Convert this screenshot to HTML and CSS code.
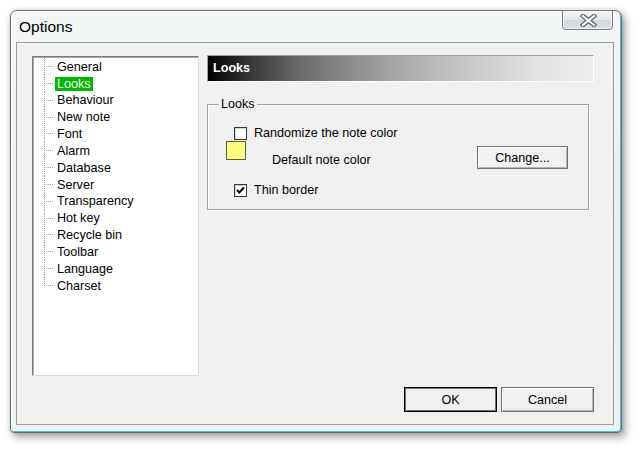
FILE: index.html
```html
<!DOCTYPE html>
<html>
<head>
<meta charset="utf-8">
<link rel="stylesheet" href="styles.css">
</head>
<body>
<div class="window">
  <div class="titlebar">
    <span class="title">Options</span>
    <button class="close" aria-label="Close">
      <svg width="17" height="13" viewBox="0 0 17 13">
        <path d="M3 2 L14 11 M14 2 L3 11" stroke="#5b6272" stroke-width="4.6" stroke-linecap="square" fill="none"/>
        <path d="M3 2 L14 11 M14 2 L3 11" stroke="#ffffff" stroke-width="2.2" stroke-linecap="square" fill="none"/>
      </svg>
    </button>
  </div>
  <div class="client">
    <div class="main">
      <ul class="tree">
        <li><span>General</span></li>
        <li class="sel"><span>Looks</span></li>
        <li><span>Behaviour</span></li>
        <li><span>New note</span></li>
        <li><span>Font</span></li>
        <li><span>Alarm</span></li>
        <li><span>Database</span></li>
        <li><span>Server</span></li>
        <li><span>Transparency</span></li>
        <li><span>Hot key</span></li>
        <li><span>Recycle bin</span></li>
        <li><span>Toolbar</span></li>
        <li><span>Language</span></li>
        <li class="last"><span>Charset</span></li>
      </ul>
      <div class="panel">
        <div class="header">Looks</div>
        <div class="group">
          <span class="legend">Looks</span>
          <div class="row r1">
            <span class="cb"></span>
            <span class="lbl">Randomize the note color</span>
          </div>
          <div class="row r2">
            <span class="swatch"></span>
            <span class="lbl2">Default note color</span>
            <button class="btn change">Change...</button>
          </div>
          <div class="row r3">
            <span class="cb"><svg width="11" height="11" viewBox="0 0 11 11"><path d="M2 5 L4.3 7.5 L9 2.5" stroke="#000" stroke-width="1.9" fill="none"/></svg></span>
            <span class="lbl">Thin border</span>
          </div>
        </div>
      </div>
    </div>
    <div class="actions">
      <button class="btn ok">OK</button>
      <button class="btn cancel">Cancel</button>
    </div>
  </div>
</div>
</body>
</html>
```

FILE: styles.css
```css
html, body {
  margin: 0;
  padding: 0;
  background: #ffffff;
}
body {
  font-family: "Liberation Sans", Arial, sans-serif;
  font-size: 12.6px;
  color: #000;
  padding: 10px 0 0 10px;
  height: 452px;
  box-sizing: border-box;
  overflow: hidden;
}
.window {
  width: 612px;
  height: 423px;
  box-sizing: border-box;
  border: 1px solid #6a6a6a;
  border-radius: 7px 7px 4px 4px;
  background: linear-gradient(to bottom, #f3f7f8 0%, #ebf1f3 40%, #edf2f3 100%);
  box-shadow: inset 1px 1px 0 #ffffff, inset -1px -1px 0 #3cc3ec, 3px 4px 9px rgba(0,0,0,0.38), 0 0 4px rgba(0,0,0,0.15);
  display: flex;
  flex-direction: column;
}
.titlebar {
  height: 31px;
  display: flex;
  justify-content: space-between;
  align-items: flex-start;
  flex: none;
}
.title {
  font-size: 15.5px;
  line-height: 18px;
  padding: 7px 0 0 8px;
  color: #000;
}
.close {
  width: 51px;
  height: 20px;
  margin: -1px 8px 0 0;
  padding: 0;
  box-sizing: border-box;
  border: 1px solid #767b82;
  border-radius: 0 0 4px 4px;
  background: linear-gradient(to bottom, #f4f5f6 0%, #e3e5e8 50%, #d3d6da 51%, #dde0e3 100%);
  box-shadow: inset 1px 0 0 #fff, inset -1px -1px 0 #f4f4f4;
  display: flex;
  align-items: center;
  justify-content: center;
}
.close svg { display: block; margin-left: 1px; }
.client {
  flex: none;
  height: 383px;
  margin: 0 7px 0 5px;
  box-sizing: border-box;
  border: 1px solid #9b9b9b;
  background: #f0f0f0;
  padding: 12px 19px 12px 15px;
  display: flex;
  flex-direction: column;
}
.main {
  display: flex;
  align-items: flex-start;
}
.tree {
  list-style: none;
  margin: 1px 0 0 0;
  padding: 1px 0 0 0;
  width: 167px;
  height: 320px;
  box-sizing: border-box;
  background: #ffffff;
  border: 1px solid;
  border-color: #7c7c7c #dadada #dadada #7c7c7c;
  box-shadow: inset 1px 1px 0 #a8a8a8;
  flex: none;
}
.tree li {
  height: 16.85px;
  line-height: 16.85px;
  padding-left: 22px;
  white-space: nowrap;
  background:
    repeating-linear-gradient(to right, #a0a0a0 0 1px, transparent 1px 2px) 11px 8px / 10px 1px no-repeat,
    repeating-linear-gradient(to bottom, #a0a0a0 0 1px, transparent 1px 2px) 11px 0 / 1px 100% no-repeat;
}
.tree li.last {
  background:
    repeating-linear-gradient(to right, #a0a0a0 0 1px, transparent 1px 2px) 11px 8px / 10px 1px no-repeat,
    repeating-linear-gradient(to bottom, #a0a0a0 0 1px, transparent 1px 2px) 11px 0 / 1px 9px no-repeat;
}
.tree li span {
  display: inline-block;
  padding: 0 2px;
  line-height: 14px;
  vertical-align: middle;
}
.tree li.sel span {
  background: #00b900;
  color: #ffffff;
}
.panel {
  margin-left: 8px;
  width: 388px;
}
.header {
  height: 27px;
  box-sizing: border-box;
  border: 1px solid;
  border-color: #a0a0a0 #ffffff #ffffff #a0a0a0;
  background: linear-gradient(to right, #000000 0%, #3c3c3c 12%, #6e6e6e 25%, #a4a4a4 47%, #c9c9c9 68%, #e2e2e2 86%, #ededed 100%);
  color: #ffffff;
  font-weight: bold;
  line-height: 25px;
  padding-left: 5px;
}
.group {
  margin-top: 22px;
  width: 382px;
  box-sizing: border-box;
  border: 1px solid #a0a0a0;
  box-shadow: inset 1px 1px 0 #ffffff, 1px 1px 0 #ffffff;
  padding-bottom: 12px;
}
.legend {
  display: block;
  width: fit-content;
  margin: -8px 0 0 11px;
  padding: 0 2px;
  line-height: 15px;
  background: #f0f0f0;
}
.row {
  display: flex;
  align-items: center;
}
.r1 { margin-top: 15px; padding-left: 26px; }
.r2 { margin-top: 1px; align-items: flex-start; }
.r3 { margin-top: 15px; padding-left: 26px; }
.cb {
  width: 13px;
  height: 13px;
  box-sizing: border-box;
  border: 1px solid #333333;
  background: #ffffff;
  box-shadow: inset 1px 1px 0 #d8d8d8;
  display: flex;
  align-items: center;
  justify-content: center;
  flex: none;
}
.cb svg { display: block; }
.lbl {
  margin-left: 7px;
  line-height: 13px;
}
.swatch {
  width: 20px;
  height: 19px;
  margin-left: 18px;
  box-sizing: border-box;
  border: 1px solid #5c5c40;
  background: #fdfd80;
  flex: none;
}
.lbl2 {
  margin: 12px 0 0 26px;
  line-height: 15px;
}
.btn {
  font-family: "Liberation Sans", Arial, sans-serif;
  font-size: 12.6px;
  color: #000;
  background: #f0f0f0;
  box-sizing: border-box;
  border: 1px solid #707070;
  box-shadow: inset 1px 1px 0 #ffffff, inset -1px -1px 0 #b4b4b4;
  padding: 0;
  margin: 0;
}
.change {
  width: 91px;
  height: 23px;
  margin: 5px 20px 0 auto;
}
.actions {
  margin-top: 11px;
  display: flex;
  justify-content: flex-end;
  gap: 4px;
}
.actions .btn {
  width: 93px;
  height: 25px;
}
.ok {
  border-color: #000000;
  box-shadow: inset 0 0 0 1px #707070;
}
```
